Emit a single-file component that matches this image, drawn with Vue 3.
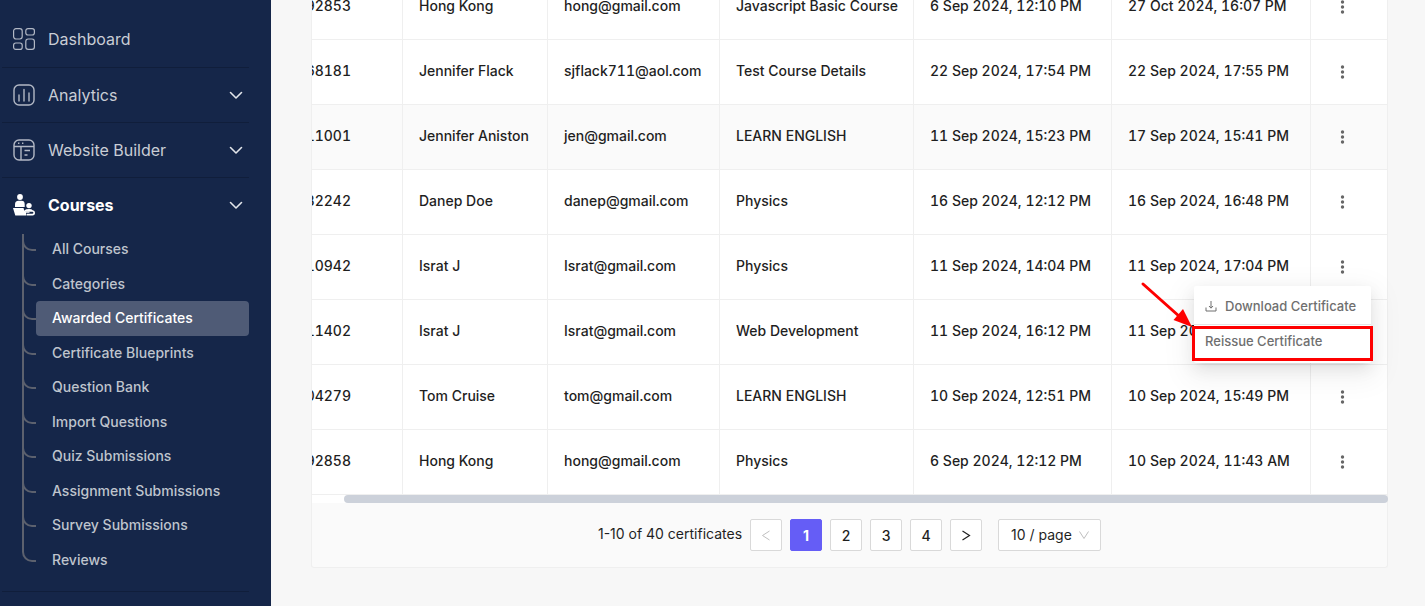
<script setup>
const topItems = [
  { label: 'Dashboard', icon: 'dash', open: false },
  { label: 'Analytics', icon: 'chart', open: true },
  { label: 'Website Builder', icon: 'site', open: true },
  { label: 'Courses', icon: 'course', open: true, active: true },
]
const subItems = [
  'All Courses', 'Categories', 'Awarded Certificates', 'Certificate Blueprints', 'Question Bank',
  'Import Questions', 'Quiz Submissions', 'Assignment Submissions', 'Survey Submissions', 'Reviews',
]
const rows = [
  ['92853', 'Hong Kong', 'hong@gmail.com', 'Javascript Basic Course', '6 Sep 2024, 12:10 PM', '27 Oct 2024, 16:07 PM'],
  ['68181', 'Jennifer Flack', 'sjflack711@aol.com', 'Test Course Details', '22 Sep 2024, 17:54 PM', '22 Sep 2024, 17:55 PM'],
  ['11001', 'Jennifer Aniston', 'jen@gmail.com', 'LEARN ENGLISH', '11 Sep 2024, 15:23 PM', '17 Sep 2024, 15:41 PM'],
  ['32242', 'Danep Doe', 'danep@gmail.com', 'Physics', '16 Sep 2024, 12:12 PM', '16 Sep 2024, 16:48 PM'],
  ['10942', 'Israt J', 'Israt@gmail.com', 'Physics', '11 Sep 2024, 14:04 PM', '11 Sep 2024, 17:04 PM'],
  ['11402', 'Israt J', 'Israt@gmail.com', 'Web Development', '11 Sep 2024, 16:12 PM', '11 Sep 2024, 17:02 PM'],
  ['04279', 'Tom Cruise', 'tom@gmail.com', 'LEARN ENGLISH', '10 Sep 2024, 12:51 PM', '10 Sep 2024, 15:49 PM'],
  ['92858', 'Hong Kong', 'hong@gmail.com', 'Physics', '6 Sep 2024, 12:12 PM', '10 Sep 2024, 11:43 AM'],
]
const pages = [1, 2, 3, 4]
</script>

<template>
  <div class="shell">
    <nav class="sidebar" aria-label="Main">
      <section v-for="item in topItems" :key="item.label" class="group">
        <a href="#" class="nav-item" :class="{ active: item.active }">
          <svg v-if="item.icon === 'dash'" class="nav-icon" viewBox="0 0 24 24" fill="none" stroke="currentColor" stroke-width="1.2">
            <rect x="1.6" y="1.6" width="8.6" height="10.4" rx="2.4" />
            <rect x="13.8" y="1.6" width="8.6" height="6.4" rx="2.2" />
            <rect x="1.6" y="16" width="8.6" height="6.4" rx="2.2" />
            <rect x="13.8" y="12" width="8.6" height="10.4" rx="2.4" />
          </svg>
          <svg v-else-if="item.icon === 'chart'" class="nav-icon" viewBox="0 0 24 24" fill="none" stroke="currentColor" stroke-width="1.4">
            <rect x="2" y="2" width="20" height="20" rx="5" />
            <path d="M7 12v6M12 6.5V18M17 10v8" stroke-linecap="round" />
          </svg>
          <svg v-else-if="item.icon === 'site'" class="nav-icon" viewBox="0 0 24 24" fill="none" stroke="currentColor" stroke-width="1.4">
            <rect x="2" y="2" width="20" height="20" rx="5" />
            <path d="M2 8.5h20M9 8.5V22M12.5 12.5h5.5M12.5 17h3" />
            <path d="M6 5.3h1.4M10 5.3h1.4" stroke-width="1.6" />
          </svg>
          <svg v-else class="nav-icon" viewBox="0 0 24 24" fill="currentColor">
            <circle cx="8" cy="4" r="2.9" />
            <path d="M3 14V11.500Q3 7.800 6.500 7.800H9.500Q12.700 7.800 12.700 11.200V14Z" />
            <path d="M1 15H11.500Q12 18.500 15 18.500H17.500V19.800H14V22.500H3.300Z" />
            <circle cx="17" cy="12.600" r="2.700" />
            <path d="M12.600 17.300Q13.800 15.900 17 15.900Q20 15.900 20.600 17.300H20.800Q23 17.300 23 19.800Q23 22.400 20.500 22.400H14.500V20.800H20.200Q21.400 20.800 21.400 19.800Q21.400 18.800 20.200 18.800H15Q12.900 18.800 12.600 17.300Z" />
          </svg>
          <span class="nav-label">{{ item.label }}</span>
          <svg v-if="item.open" class="chev" viewBox="0 0 14 14" fill="none" stroke="currentColor" stroke-width="1.6" stroke-linecap="round" stroke-linejoin="round">
            <path d="M1.500 4.500 7 10 12.500 4.500" />
          </svg>
        </a>
        <ul v-if="item.active" class="sub">
          <li v-for="s in subItems" :key="s">
            <a href="#" class="sub-link" :class="{ current: s === 'Awarded Certificates' }">{{ s }}</a>
          </li>
        </ul>
      </section>
    </nav>

    <main class="content">
      <div class="card">
        <table>
          <colgroup>
            <col v-for="n in 7" :key="n" :class="'c' + n" />
          </colgroup>
          <tbody>
            <tr v-for="(r, i) in rows" :key="i" :class="{ hover: i === 2 }">
              <td v-for="(c, j) in r" :key="j">
                <div v-if="j === 0" class="tail">{{ c }}</div>
                <template v-else>{{ c }}</template>
              </td>
              <td class="actions">
                <button type="button" class="more" aria-label="Row actions">
                  <svg viewBox="0 0 16 16" fill="currentColor">
                    <circle cx="7.500" cy="3" r="1.700" /><circle cx="7.500" cy="8" r="1.700" /><circle cx="7.500" cy="13" r="1.700" />
                  </svg>
                </button>
                <div v-if="i === 4" class="menu">
                  <button type="button" class="menu-item">
                    <svg class="dl" viewBox="0 0 12 12" fill="none" stroke="currentColor" stroke-width="1">
                      <path d="M1 7.500V11H11V7.500M6 1V8M4 6 6 8.200 8 6" />
                    </svg>
                    Download Certificate
                  </button>
                  <button type="button" class="menu-item second">Reissue Certificate</button>
                  <div class="mark"></div>
                  <svg class="arrow" viewBox="0 0 54 48">
                    <path d="M3 3 40 36" stroke="#fe0000" stroke-width="3" stroke-linecap="round" />
                    <path d="M52 46 33.500 39 43 28Z" fill="#fe0000" />
                  </svg>
                </div>
              </td>
            </tr>
          </tbody>
        </table>
        <div class="track"><div class="thumb"></div></div>
        <footer class="pager">
          <span class="total">1-10 of 40 certificates</span>
          <button type="button" class="page" disabled aria-label="Previous page">
            <svg viewBox="0 0 12 12" fill="none" stroke="currentColor"><path d="M9.500 2 2.500 6.500 9.500 11" /></svg>
          </button>
          <button v-for="p in pages" :key="p" type="button" class="page" :class="{ on: p === 1 }">{{ p }}</button>
          <button type="button" class="page" aria-label="Next page">
            <svg viewBox="0 0 12 12" fill="none" stroke="currentColor" stroke-width="1.200"><path d="M2.500 2 9.500 6.500 2.500 11" /></svg>
          </button>
          <div class="size">
            <select aria-label="Page size"><option>10 / page</option></select>
            <svg viewBox="0 0 12 12" fill="none" stroke="currentColor"><path d="M1.500 2.500 6 9.500 10.500 2.500" /></svg>
          </div>
        </footer>
      </div>
    </main>
  </div>
</template>

<style>
body { margin: 0; background: #f7f7f7; }
</style>

<style scoped>
.shell {
  display: flex;
  height: 100vh;
  overflow: hidden;
  font-family: Inter, "Open Sans", sans-serif;
  font-size: 14px;
  font-weight: 500;
  color: #1f1f1f;
}
.shell *, .shell { box-sizing: border-box; }
button, select { font: inherit; color: inherit; margin: 0; padding: 0; }
.sidebar {
  flex: 0 0 271px;
  padding: 12px 22px 0 2px;
  background: #152649;
  overflow: hidden;
}
.group { border-bottom: 1px solid #101e3b; }
.nav-item {
  display: flex;
  align-items: center;
  height: 54px;
  padding: 0 6px 0 10px;
  color: #c9cdd5;
  font-size: 16px;
  font-weight: 400;
  text-decoration: none;
}
.group:first-child { padding-bottom: 1px; }
.nav-icon { width: 24px; height: 24px; color: #b2b8c5; }
.nav-label { flex: 1; margin-left: 12px; }
.chev { width: 14px; height: 14px; color: #e2e5ea; }
.nav-item.active, .active .nav-icon { color: #fff; }
.nav-item.active { font-weight: 700; }
.sub { list-style: none; margin: 0; padding: 0 0 14px 20px; }
.sub li { position: relative; padding-left: 14px; }
.sub li::before {
  content: "";
  position: absolute;
  box-sizing: border-box;
  left: 0;
  top: 0;
  width: 14px;
  height: 19px;
  border: solid #5c616e;
  border-width: 0 0 2px 2px;
  border-bottom-left-radius: 10px;
}
.sub li:not(:last-child)::after {
  content: "";
  position: absolute;
  left: 0;
  top: 0;
  bottom: 0;
  width: 2px;
  background: #5c616e;
}
.sub li:first-child::before { top: 2px; height: 17px; }
.sub li:first-child::after { top: 2px; }
.sub-link {
  display: block;
  height: 35px;
  padding: 0 16px;
  border-radius: 4px;
  line-height: 34px;
  color: #bfc4cd;
  text-decoration: none;
}
.sub li:nth-child(even) .sub-link { height: 34px; }
.sub-link.current { background: #4f5b76; color: #fff; }
.content { flex: 1; min-width: 0; padding: 0 37px 0 40px; }
.card {
  margin-top: -25px;
  border: 1px solid #efefef;
  border-top: 0;
  border-radius: 0 0 3px 3px;
  background: #fafafa;
}
table { width: 100%; table-layout: fixed; border-collapse: separate; border-spacing: 0; background: #fff; }
.c1 { width: 91px; } .c2 { width: 145px; } .c3 { width: 172px; } .c4 { width: 194px; }
.c5 { width: 198px; } .c6 { width: 199px; }
td {
  height: 65px;
  padding: 0 0 4px 16px;
  border-right: 1px solid #efefef;
  border-bottom: 1px solid #efefef;
  white-space: nowrap;
  font-variant-numeric: tabular-nums;
}
td:first-child { padding: 0 51px 4px 0; }
td.actions { position: relative; padding: 0; border-right: 0; }
.tail { display: flex; justify-content: flex-end; overflow: hidden; }
.hover td { background: #fafafa; }
.more { display: flex; width: 16px; margin-left: 24px; border: 0; background: none; color: #666; }
.more svg { width: 16px; height: 16px; }
.menu {
  position: absolute;
  z-index: 2;
  top: 51px;
  right: 16px;
  width: 177px;
  border-radius: 2px;
  background: #fff;
  box-shadow: 0 3px 6px -4px rgba(0, 0, 0, .12), 0 6px 16px rgba(0, 0, 0, .08), 0 9px 28px 8px rgba(0, 0, 0, .05);
}
.menu-item {
  display: flex;
  align-items: center;
  gap: 8px;
  width: 100%;
  height: 39px;
  padding: 2px 11px 0;
  border: 0;
  border-bottom: 1px solid #e4e4e4;
  background: none;
  color: #6f6f6f;
  font-size: 13px;
  white-space: nowrap;
}
.menu-item.second { height: 38px; padding: 0 11px 6px; border-bottom: 0; }
.dl { width: 12px; height: 12px; }
.mark { position: absolute; top: 40px; left: -2px; right: -2px; height: 35px; border: 3px solid #fe0000; }
.arrow { position: absolute; left: -54px; top: -5px; width: 54px; height: 48px; }
.track { height: 8px; padding-left: 32px; background: linear-gradient(to right, #fff 40px, transparent 0); }
.thumb { height: 8px; margin-right: -1px; border-radius: 4px; background: #ccd1da; }
.pager { display: flex; align-items: center; justify-content: center; gap: 8px; height: 64px; }
.total { padding-bottom: 3px; font-weight: 400; }
.page {
  display: flex;
  align-items: center;
  justify-content: center;
  width: 32px;
  height: 32px;
  border: 1px solid #d9d9d9;
  border-radius: 2px;
  background: #fff;
}
.page svg { width: 12px; height: 12px; }
.page:disabled { color: #bfbfbf; }
.page.on { border-color: #655df6; background: #655df6; color: #fff; font-weight: 700; }
.size { position: relative; margin-left: 8px; }
.size select {
  display: block;
  width: 103px;
  height: 32px;
  padding: 0 24px 2px 12px;
  border: 1px solid #d9d9d9;
  border-radius: 2px;
  background: #fff;
  font-weight: 400;
  appearance: none;
}
.size svg { position: absolute; right: 11px; top: 10px; width: 12px; height: 12px; color: #bfbfbf; pointer-events: none; }
</style>
